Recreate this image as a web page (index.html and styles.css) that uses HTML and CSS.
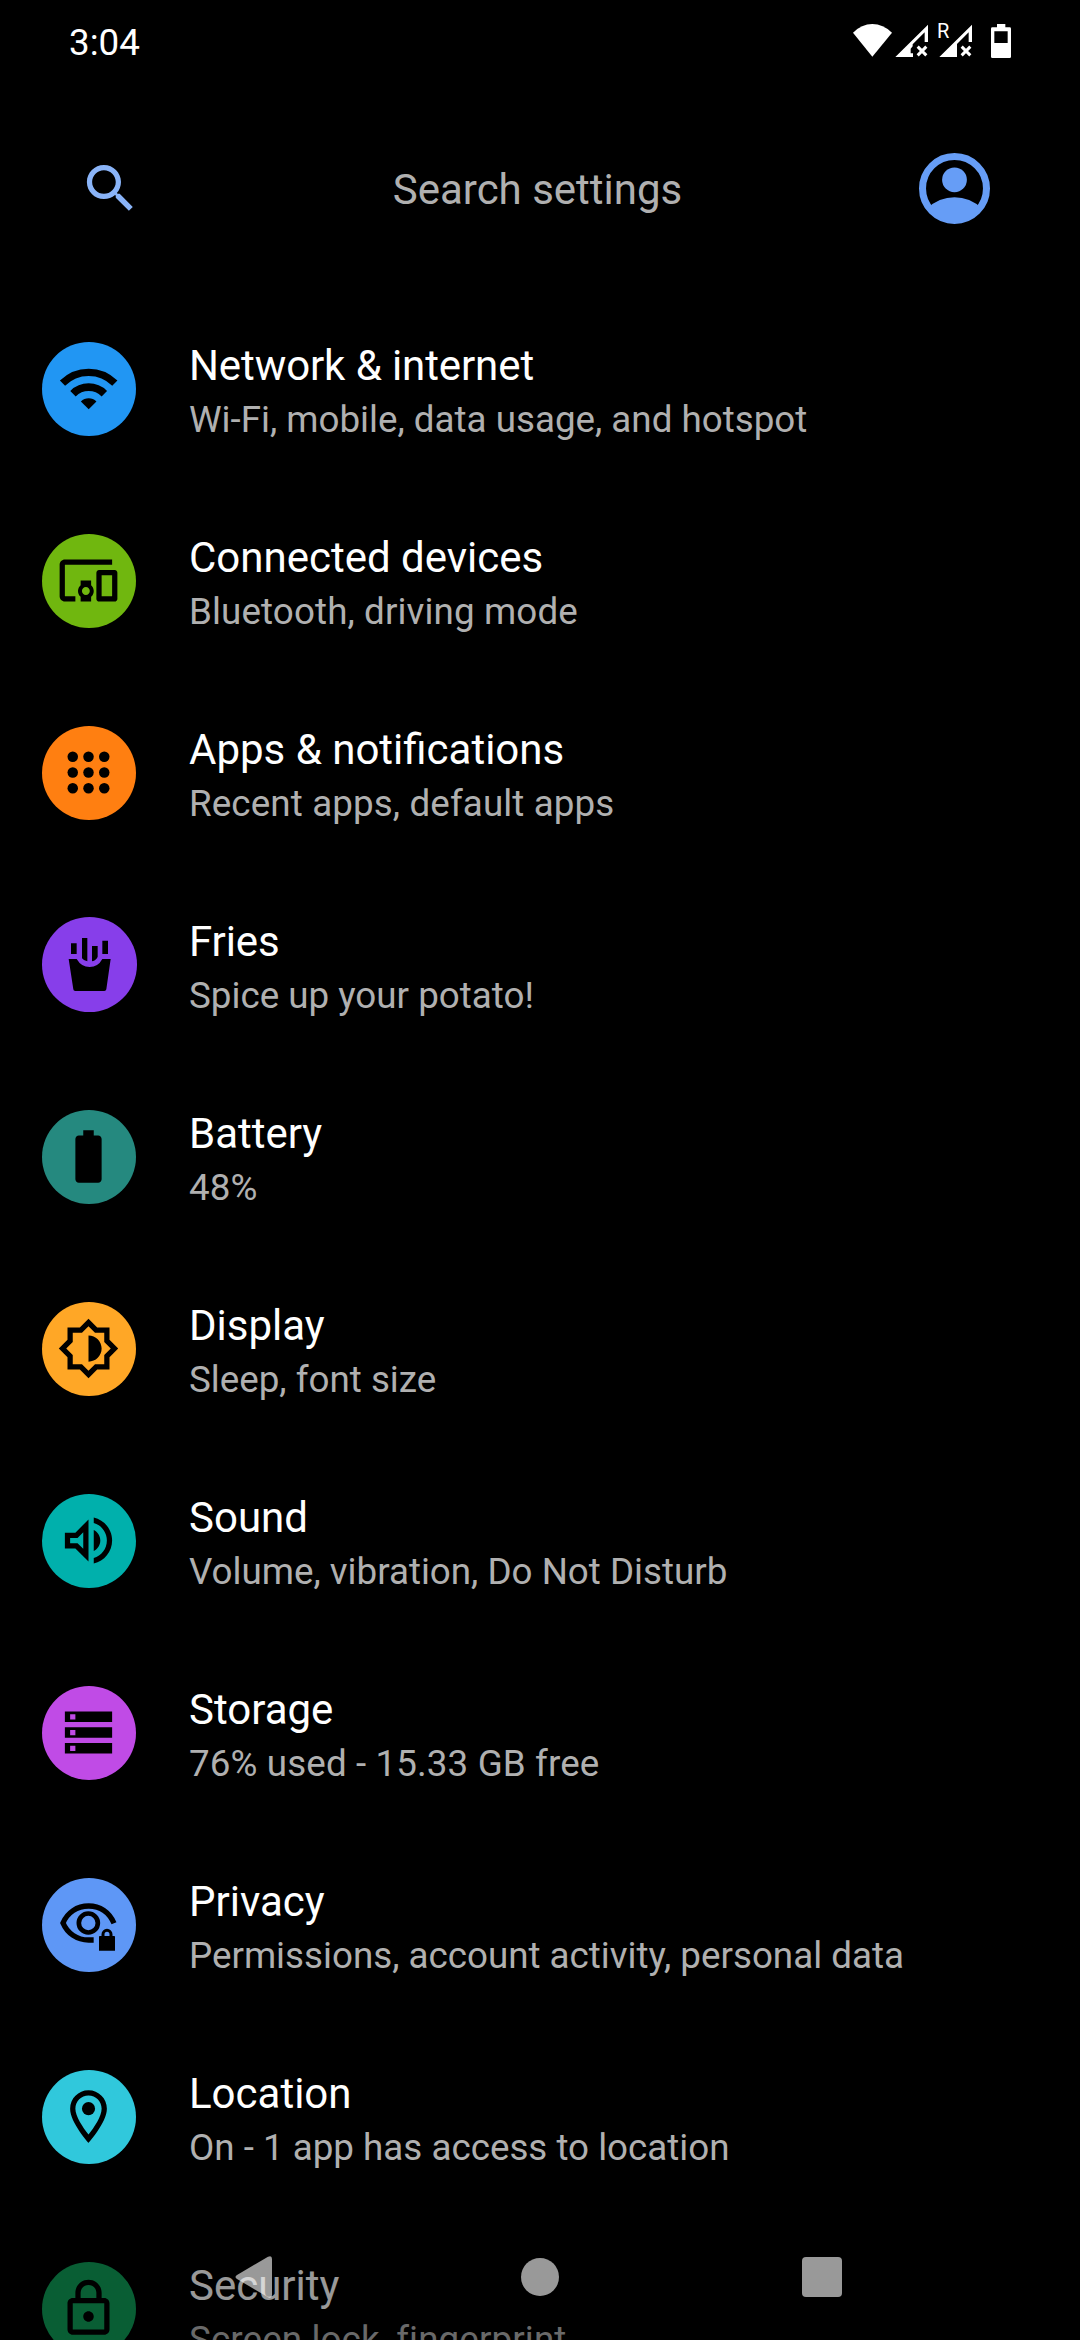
FILE: index.html
```html
<!DOCTYPE html>
<html lang="en">
<head>
<meta charset="utf-8">
<title>Settings</title>
<link rel="stylesheet" href="styles.css">
</head>
<body>
<div class="screen">
  <header class="status-bar">
    <span class="clock">3:04</span>
    <svg class="status-icons" viewBox="90 60 495 120">
      <path d="M157 170L99 98Q125 72 157 72T216 98Z"/>
      <path d="M226 171L324 74V126H314V97L278 133V139L272 146V160H279V171Z"/>
      <path class="cross" d="M293 140L319 166M319 140L293 166"/>
      <text class="roaming" x="351" y="113">R</text>
      <path d="M358 171L456 74V126H446V97L411 132V171Z"/>
      <path class="cross" d="M425 140L451 166M451 140L425 166"/>
      <path fill-rule="evenodd" d="M531 72H556V82H569Q573 82 573 86V170Q573 174 569 174H517Q513 174 513 170V86Q513 82 517 82H531ZM523 94V129H563V94Z"/>
    </svg>
  </header>

  <div class="search-bar">
    <svg class="search-icon" viewBox="0 0 24 24"><path d="M15.5 14h-.79l-.28-.27C15.41 12.59 16 11.11 16 9.5 16 5.91 13.09 3 9.5 3S3 5.91 3 9.5 5.91 16 9.5 16c1.61 0 3.09-.59 4.23-1.57l.27.28v.79l5 4.99L20.49 19l-4.99-5zm-6 0C7.01 14 5 11.99 5 9.5S7.01 5 9.5 5 14 7.01 14 9.5 11.99 14 9.5 14z"/></svg>
    <span class="search-label">Search settings</span>
    <svg class="avatar" viewBox="0 0 212 212">
      <defs><clipPath id="face"><circle cx="106" cy="106" r="100"/></clipPath></defs>
      <circle class="ring" cx="106" cy="106" r="95.5"/>
      <circle cx="106" cy="80" r="37"/>
      <circle cx="106" cy="246" r="114" clip-path="url(#face)"/>
    </svg>
  </div>

  <main class="list">
    <div class="row">
      <span class="badge network"><svg viewBox="111 111 189 189"><path class="line" stroke-width="22" d="M127.5 189.500A111 111 0 0 1 284.500 189.500"/><path class="line" stroke-width="23" d="M159 221A66.500 66.500 0 0 1 253 221"/><path d="M206 268L182.700 244.700A33 33 0 0 1 229.300 244.700Z"/></svg></span>
      <div class="text"><div class="title snug">Network &amp; internet</div><div class="summary">Wi-Fi, mobile, data usage, and hotspot</div></div>
    </div>
    <div class="row">
      <span class="badge devices"><svg viewBox="0 0 24 24"><path d="M3 6h18V4H3c-1.100 0-2 .9-2 2v12c0 1.100.9 2 2 2h4v-2H3V6zm10 6H9v1.780c-.61.55-1 1.330-1 2.220s.39 1.670 1 2.220V20h4v-1.780c.61-.55 1-1.340 1-2.220s-.39-1.670-1-2.220V12zm-2 5.500c-.83 0-1.500-.67-1.500-1.500s.67-1.500 1.500-1.500 1.500.67 1.500 1.500-.67 1.500-1.500 1.500zM22 8h-6c-.5 0-1 .5-1 1v10c0 .5.5 1 1 1h6c.5 0 1-.5 1-1V9c0-.5-.5-1-1-1zm-1 10h-4v-8h4v8z"/></svg></span>
      <div class="text"><div class="title">Connected devices</div><div class="summary loose">Bluetooth, driving mode</div></div>
    </div>
    <div class="row">
      <span class="badge apps"><svg viewBox="0 0 24 24"><circle cx="6" cy="6" r="2"/><circle cx="12" cy="6" r="2"/><circle cx="18" cy="6" r="2"/><circle cx="6" cy="12" r="2"/><circle cx="12" cy="12" r="2"/><circle cx="18" cy="12" r="2"/><circle cx="6" cy="18" r="2"/><circle cx="12" cy="18" r="2"/><circle cx="18" cy="18" r="2"/></svg></span>
      <div class="text"><div class="title">Apps &amp; notifications</div><div class="summary loose">Recent apps, default apps</div></div>
    </div>
    <div class="row">
      <span class="badge fries"><svg viewBox="111 699 189 189"><path d="M153 730H170V762H153ZM186 714H202V784Q190 781 186 775ZM216 738H233V770Q230 780 216 784ZM247 722H264V762H247ZM146 777H170Q184 801 209 801T247 777H272L259 868Q258 873 253 873H166Q160 873 160 868Z"/></svg></span>
      <div class="text"><div class="title snug">Fries</div><div class="summary">Spice up your potato!</div></div>
    </div>
    <div class="row">
      <span class="badge battery"><svg viewBox="0 0 24 24"><path d="M15.670 4H14V2h-4v2H8.330C7.600 4 7 4.600 7 5.330v15.330C7 21.400 7.600 22 8.330 22h7.330c.74 0 1.340-.6 1.340-1.330V5.330C17 4.600 16.400 4 15.670 4z"/></svg></span>
      <div class="text"><div class="title">Battery</div><div class="summary loose">48%</div></div>
    </div>
    <div class="row">
      <span class="badge display"><svg viewBox="0 0 24 24"><path d="M20 8.690V4h-4.690L12 .69 8.690 4H4v4.690L.69 12 4 15.310V20h4.690L12 23.310 15.310 20H20v-4.690L23.310 12 20 8.690zm-2 5.790V18h-3.520L12 20.480 9.520 18H6v-3.520L3.520 12 6 9.520V6h3.520L12 3.520 14.480 6H18v3.520L20.480 12 18 14.480zM12 7v10c2.760 0 5-2.240 5-5s-2.240-5-5-5z"/></svg></span>
      <div class="text"><div class="title">Display</div><div class="summary">Sleep, font size</div></div>
    </div>
    <div class="row">
      <span class="badge sound"><svg viewBox="0 0 24 24"><path d="M3 9v6h4l5 5V4L7 9H3zm7-.17v6.340L7.830 13H5v-2h2.830L10 8.830zM16.500 12c0-1.770-1.020-3.290-2.500-4.030v8.050c1.480-.73 2.500-2.250 2.500-4.020zM14 3.230v2.060c2.890.86 5 3.540 5 6.710s-2.110 5.850-5 6.710v2.060c4.010-.91 7-4.490 7-8.770 0-4.280-2.990-7.860-7-8.770z"/></svg></span>
      <div class="text"><div class="title">Sound</div><div class="summary">Volume, vibration, Do Not Disturb</div></div>
    </div>
    <div class="row">
      <span class="badge storage"><svg viewBox="0 0 24 24"><path fill-rule="evenodd" d="M3 4h18v4H3zM5 5v2h2V5zM3 10h18v4H3zM5 11v2h2v-2zM3 16h18v4H3zM5 17v2h2v-2z"/></svg></span>
      <div class="text"><div class="title">Storage</div><div class="summary loose">76% used - 15.33 GB free</div></div>
    </div>
    <div class="row">
      <span class="badge privacy"><svg viewBox="111 99 189 189"><path class="line" stroke-width="16" d="M282 190C268 157 240 138 206 138C171 138 142 158 129 189C142 220 171 240 206 240H221"/><circle class="line" stroke-width="14" cx="205" cy="189" r="28.500"/><path class="line" stroke-width="9" d="M249 230V223A12 12 0 0 1 273 223V230"/><path d="M239 228H283Q285 228 285 230V272H237V230Q237 228 239 228Z"/></svg></span>
      <div class="text"><div class="title">Privacy</div><div class="summary">Permissions, account activity, personal data</div></div>
    </div>
    <div class="row">
      <span class="badge location"><svg viewBox="0 0 24 24"><path d="M12 2C8.130 2 5 5.130 5 9c0 5.250 7 13 7 13s7-7.750 7-13c0-3.870-3.130-7-7-7zM7 9c0-2.760 2.240-5 5-5s5 2.240 5 5c0 2.880-2.880 7.190-5 9.880C9.920 16.210 7 11.850 7 9z"/><circle cx="12" cy="9" r="2.500"/></svg></span>
      <div class="text"><div class="title">Location</div><div class="summary">On - 1 app has access to location</div></div>
    </div>
    <div class="row">
      <span class="badge security"><svg viewBox="0 0 24 24"><path d="M18 8h-1V6c0-2.760-2.240-5-5-5S7 3.240 7 6v2H6c-1.100 0-2 .9-2 2v10c0 1.100.9 2 2 2h12c1.100 0 2-.9 2-2V10c0-1.100-.9-2-2-2zM9 6c0-1.660 1.340-3 3-3s3 1.340 3 3v2H9V6zm9 14H6V10h12v10zm-6-3c1.100 0 2-.9 2-2s-.9-2-2-2-2 .9-2 2 .9 2 2 2z"/></svg></span>
      <div class="text"><div class="title">Security</div><div class="summary loose">Screen lock, fingerprint</div></div>
    </div>
  </main>

  <nav class="nav-bar">
    <svg class="back" viewBox="0 0 38 42"><path d="M2 19L33 .8Q37 -1 37 3V39Q37 43 33 41.200L2 23Q-1 21 2 19Z"/></svg>
    <span class="home"></span>
    <span class="recents"></span>
  </nav>
</div>
</body>
</html>
```
FILE: styles.css
```css
* { box-sizing: border-box; }

body {
  margin: 0;
  background: #000;
  font-family: Roboto, sans-serif;
}

.screen {
  position: relative;
  display: flex;
  flex-direction: column;
  width: 1080px;
  height: 2340px;
  overflow: hidden;
  background: #000;
}

.status-bar {
  display: flex;
  flex: none;
  justify-content: space-between;
  align-items: flex-start;
  height: 84px;
  padding: 20px 65px 0 69px;
  color: #fff;
}

.clock { font-size: 36.75px; line-height: 46px; }

.status-icons { width: 165px; height: 40px; fill: #fff; }
.cross { stroke: #fff; stroke-width: 9; }
.roaming { font-size: 60px; }

.search-bar {
  display: flex;
  flex: none;
  justify-content: space-between;
  align-items: center;
  height: 209px;
  padding: 0 90px 0 79px;
}

.search-icon { width: 63px; height: 63px; fill: #8ab4f8; }
.search-label {
  margin: 2px 0 0 14px;
  color: #b0b0b0;
  font-size: 42px;
  line-height: 52px;
}
.avatar { width: 71px; height: 71px; fill: #669df6; }
.ring { fill: none; stroke: #669df6; stroke-width: 21; }

.list { flex: none; }

.row {
  display: flex;
  align-items: flex-start;
  height: 192px;
  padding-left: 42px;
}

.badge {
  flex: none;
  width: 94px;
  height: 94px;
  margin: 49px 53px 0 0;
  padding: 15px 0 0 15.4px;
  border-radius: 50%;
}

.badge svg { display: block; width: 63px; height: 63px; fill: #000; }
.badge .line { fill: none; stroke: #000; }

.network { background: #2196f3; }
.devices { background: #70b70f; }
.apps { background: #ff7f11; }
.fries {
  width: 95px;
  height: 95px;
  margin: 48px 52px 0 0;
  padding-top: 16px;
  background: #873eea;
}
.battery { background: #25897f; }
.display { background: #ffa726; }
.sound { background: #00b0ac; }
.storage { background: #c04be6; }
.privacy { background: #5e97f6; }
.location { background: #30c8dc; }
.security { background: #0f9d58; }

.text { padding-top: 46px; white-space: nowrap; }
.title { color: #fff; font-size: 42px; line-height: 54px; }
.summary { color: #b0b0b0; font-size: 36.75px; line-height: 53px; }
.snug { letter-spacing: -0.1px; }
.loose { letter-spacing: 0.12px; }

.nav-bar {
  position: absolute;
  left: 0;
  right: 0;
  bottom: 0;
  display: flex;
  justify-content: space-between;
  align-items: center;
  height: 126px;
  padding: 0 238px 0 235px;
  background: rgba(0, 0, 0, 0.4);
}

.back { width: 38px; height: 42px; fill: rgba(255, 255, 255, 0.6); }
.home {
  width: 38px;
  height: 38px;
  margin-left: 5px;
  border-radius: 50%;
  background: rgba(255, 255, 255, 0.6);
}
.recents { width: 40px; height: 40px; border-radius: 4px; background: rgba(255, 255, 255, 0.6); }
```
